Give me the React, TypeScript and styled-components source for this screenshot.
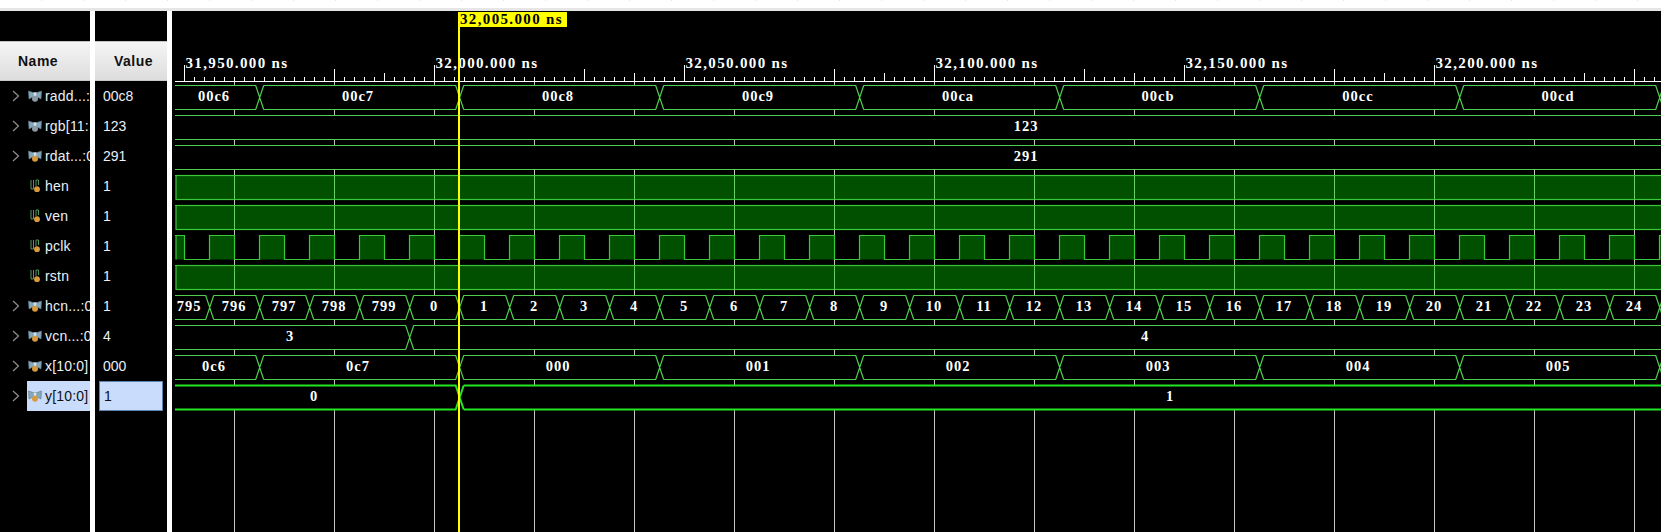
import React from "react"
import styled, { createGlobalStyle } from "styled-components"

const GlobalStyle = createGlobalStyle`
    html, body {
        margin: 0;
        padding: 0;
        background: #fff;
        overflow: hidden;
    }
`

const Page = styled.div`
    width: 1661px;
    height: 532px;
    display: flex;
    flex-direction: column;
    font-family: "Liberation Sans", Arial, sans-serif;
    font-size: 14px;
    background: #fff;
`

const TopStrip = styled.div`
    height: 8px;
    flex: none;
    background: repeating-linear-gradient(90deg, #fff 0 41px, #e4e4e4 41px 42px) top / 100% 1px no-repeat #fff;
    border-bottom: 3px solid #e6e6e6;
`

const Main = styled.div`
    flex: 1;
    display: flex;
    gap: 5px;
    min-height: 0;
`

const Column = styled.div<{ $width: number }>`
    width: ${p => p.$width}px;
    flex: none;
    background: #000;
    padding-top: 30px;
    overflow: hidden;
`

const HeaderCell = styled.div<{ $pad: number }>`
    height: 40px;
    box-sizing: border-box;
    display: flex;
    align-items: center;
    padding-left: ${p => p.$pad}px;
    background: linear-gradient(#f5f5f5, #dddddd);
    border-top: 1px solid #c4c4c4;
    border-bottom: 1px solid #c8c8c8;
    color: #111;
    font-weight: bold;
    letter-spacing: 0.5px;
`

const NameRow = styled.div<{ $selected?: boolean }>`
    height: 30px;
    display: flex;
    align-items: center;
    white-space: nowrap;
    padding-left: 12px;
    letter-spacing: 0.2px;
    color: ${p => (p.$selected ? "#101010" : "#e9f0f6")};
    background: ${p => (p.$selected ? "linear-gradient(90deg, #000 27px, #c9dcfb 27px)" : "none")};
`

const Chevron = styled.svg`
    width: 8px;
    height: 12px;
    flex: none;
`

const ChevronSlot = styled.div`
    width: 16px;
    flex: none;
    display: flex;
`

const SignalIcon = styled.svg`
    width: 14px;
    height: 14px;
    flex: none;
    margin-right: 3px;
`

const ValueRow = styled.div<{ $selected?: boolean }>`
    height: 30px;
    box-sizing: border-box;
    display: flex;
    align-items: center;
    padding-left: ${p => (p.$selected ? "4px" : "8px")};
    margin-left: ${p => (p.$selected ? "4px" : "0")};
    width: ${p => (p.$selected ? "64px" : "auto")};
    color: ${p => (p.$selected ? "#101010" : "#e9f0f6")};
    background: ${p => (p.$selected ? "#c9dcfb" : "none")};
    border: ${p => (p.$selected ? "1px solid #5a83ab" : "none")};
`

const WavePanel = styled.div`
    flex: 1;
    background: #000;
    min-width: 0;
`

const WaveSvg = styled.svg`
    display: block;
    width: 100%;
    height: 100%;
`

const TimeText = styled.text`
    font-family: "Liberation Serif", "DejaVu Serif", serif;
    font-size: 15px;
    font-weight: bold;
    letter-spacing: 1.35px;
    fill: #fff;
`

const BusText = styled(TimeText)`
    font-size: 14.5px;
    letter-spacing: 1px;
    text-anchor: middle;
`

const CursorText = styled(TimeText)`
    fill: #000;
`

type Signal = { name: string; value: string; kind: "bus" | "bit"; orb: string; selected?: boolean }

const signals: Signal[] = [
    { name: "radd...:", value: "00c8", kind: "bus", orb: "#8d9aa3" },
    { name: "rgb[11:", value: "123", kind: "bus", orb: "#8d9aa3" },
    { name: "rdat...:0", value: "291", kind: "bus", orb: "#d99a3c" },
    { name: "hen", value: "1", kind: "bit", orb: "#d99a3c" },
    { name: "ven", value: "1", kind: "bit", orb: "#d99a3c" },
    { name: "pclk", value: "1", kind: "bit", orb: "#d99a3c" },
    { name: "rstn", value: "1", kind: "bit", orb: "#d99a3c" },
    { name: "hcn...:0", value: "1", kind: "bus", orb: "#d99a3c" },
    { name: "vcn...:0", value: "4", kind: "bus", orb: "#d99a3c" },
    { name: "x[10:0]", value: "000", kind: "bus", orb: "#d99a3c" },
    { name: "y[10:0]", value: "1", kind: "bus", orb: "#d99a3c", selected: true },
]

// panel starts at x=172, y=11 so everything below is shifted from page coords
const px = (x: number) => x - 172
const py = (y: number) => y - 11
const W = 1489
const H = 521
const rowTop = (i: number) => 85.5 + 30 * i
const LINE = "#4fcf4f"
const BRIGHT = "#24e524"
const FILL = "#005000"
const FILL_LINE = "#38c838"
const GRID = "#c4c4c4"

const gridXs = Array.from({ length: 15 }, (_, i) => 234.5 + i * 100)
const range = (n: number, f: (i: number) => number) => Array.from({ length: n }, (_, i) => f(i))

const tallTicks = [334, 584, 834, 1084, 1334, 1634]
const midTicks = [384, 634, 884, 1134, 1384, 1584]
const labels = [
    { x: 184.5, t: "31,950.000 ns" },
    { x: 434.5, t: "32,000.000 ns" },
    { x: 684.5, t: "32,050.000 ns" },
    { x: 934.5, t: "32,100.000 ns" },
    { x: 1184.5, t: "32,150.000 ns" },
    { x: 1434.5, t: "32,200.000 ns" },
]

const Ruler = () => {
    const ticks = range(150, i => 184.5 + i * 10)
    return (
        <g>
            <line x1={px(175)} x2={W} y1={py(81.5)} y2={py(81.5)} stroke="#fff" />
            {ticks.map(x => {
                const n = Math.floor(x)
                let top = 77
                if (tallTicks.includes(n)) top = 69
                if (midTicks.includes(n)) top = 73
                if (labels.some(l => l.x === x)) top = 65
                return <line key={x} x1={px(x)} x2={px(x)} y1={py(top)} y2={py(81)} stroke="#fff" />
            })}
            {labels.map(l => (
                <TimeText key={l.t} x={px(l.x + 1)} y={py(68)}>{l.t}</TimeText>
            ))}
        </g>
    )
}

const Bus = ({ row, edges, text, bright }: {
    row: number
    edges: number[]
    text: { x: number; t: string }[]
    bright?: boolean
}) => {
    const top = rowTop(row)
    const bot = top + 24
    const hw = 4
    let d = ""
    let start = 175
    edges.forEach(e => {
        d += `M${px(start)} ${py(top)}L${px(e - hw)} ${py(top)}L${px(e + hw)} ${py(bot)}`
        d += `M${px(start)} ${py(bot)}L${px(e - hw)} ${py(bot)}L${px(e + hw)} ${py(top)}`
        start = e + hw
    })
    d += `M${px(start)} ${py(top)}L${W} ${py(top)}M${px(start)} ${py(bot)}L${W} ${py(bot)}`
    return (
        <g>
            <rect x={px(175)} y={py(top)} width={W} height={24} fill="#000" />
            <path d={d} fill="none" stroke={bright ? BRIGHT : LINE} strokeWidth={bright ? 2 : 1.2} />
            {text.map(l => (
                <BusText key={l.x} x={px(l.x)} y={py(top + 15)}>{l.t}</BusText>
            ))}
        </g>
    )
}

const HighBar = ({ row }: { row: number }) => {
    const top = rowTop(row)
    return (
        <g>
            <rect x={px(176)} y={py(top)} width={W} height={24} fill={FILL} stroke={FILL_LINE} strokeWidth={1.2} />
            <line x1={px(175)} x2={px(176)} y1={py(top)} y2={py(top)} stroke={FILL_LINE} />
            {gridXs.map(x => (
                <line key={x} x1={px(x)} x2={px(x)} y1={py(top)} y2={py(top + 24)} stroke="#66cf66" />
            ))}
        </g>
    )
}

const Clock = ({ row }: { row: number }) => {
    const top = rowTop(row)
    const bot = top + 24
    const pulses = [[176, 184.5], ...range(30, i => 209.5 + i * 50).map(x => [x, x + 25])]
    let d = `M${px(175)} ${py(top)}`
    pulses.forEach(([a, b]) => {
        d += `L${px(a)} ${py(bot)}`.replace("L", a === 176 ? "M" : "L")
        d += `L${px(a)} ${py(top)}L${px(b)} ${py(top)}L${px(b)} ${py(bot)}`
    })
    return (
        <g>
            <rect x={px(175)} y={py(top)} width={W} height={24} fill="#000" />
            {pulses.map(([a, b]) => (
                <rect key={a} x={px(a)} y={py(top)} width={b - a} height={24} fill={FILL} />
            ))}
            <line x1={px(175)} x2={px(176)} y1={py(top)} y2={py(top)} stroke={FILL_LINE} />
            <path d={d} fill="none" stroke={FILL_LINE} strokeWidth={1.2} />
        </g>
    )
}

const addrEdges = range(8, i => 259.7 + i * 200)
const slotCentres = range(8, i => (i === 0 ? 214 : 158 + i * 200))
const addrText = ["00c6", "00c7", "00c8", "00c9", "00ca", "00cb", "00cc", "00cd"]
const xText = ["0c6", "0c7", "000", "001", "002", "003", "004", "005"]
const hcntEdges = range(30, i => 209.7 + i * 50)
const hcntText = range(30, i => {
    const n = i < 5 ? 795 + i : i - 5
    return { x: i === 0 ? 189 : 184 + i * 50, t: String(n) }
})

const Waves = () => (
    <WaveSvg viewBox={`0 0 ${W} ${H}`}>
        {gridXs.map(x => (
            <line key={x} x1={px(x)} x2={px(x)} y1={py(82)} y2={H} stroke={GRID} />
        ))}
        <Ruler />
        <Bus row={0} edges={addrEdges} text={addrText.map((t, i) => ({ x: slotCentres[i], t }))} />
        <Bus row={1} edges={[]} text={[{ x: 1026, t: "123" }]} />
        <Bus row={2} edges={[]} text={[{ x: 1026, t: "291" }]} />
        <HighBar row={3} />
        <HighBar row={4} />
        <Clock row={5} />
        <HighBar row={6} />
        <Bus row={7} edges={hcntEdges} text={hcntText} />
        <Bus row={8} edges={[409.7]} text={[{ x: 290, t: "3" }, { x: 1145, t: "4" }]} />
        <Bus row={9} edges={addrEdges} text={xText.map((t, i) => ({ x: slotCentres[i], t }))} />
        <Bus row={10} edges={[459.7]} text={[{ x: 314, t: "0" }, { x: 1170, t: "1" }]} bright />
        <line x1={px(459)} x2={px(459)} y1={py(12)} y2={H} stroke="#ffff00" strokeWidth={2} />
        <rect x={px(459)} y={py(12)} width={108} height={15} fill="#ffff00" />
        <CursorText x={px(460)} y={py(24)}>32,005.000 ns</CursorText>
    </WaveSvg>
)

const BusGlyph = ({ orb }: { orb: string }) => (
    <SignalIcon viewBox="0 0 14 14">
        <path d="M0.5 2 L5 3.5 L9 3.5 L13.5 2 L13 10 L9 8 L5 8 L1 10 Z" fill="#86a8bb" stroke="#5f7b8a" strokeWidth="0.6" />
        <path d="M5.5 3.5 L8.5 3.5 L8 7 L6 7 Z" fill="#d5dfe6" />
        <circle cx="7" cy="9.8" r="3" fill={orb} />
    </SignalIcon>
)

const BitGlyph = ({ orb }: { orb: string }) => (
    <SignalIcon viewBox="0 0 14 14">
        <path d="M3 1 L3 10 L5.5 10 M5.5 10 L5.5 1 M8 1 L8 7 M10.5 1 L10.5 6 M8 1 L10.5 1" fill="none" stroke="#4f9a5c" strokeWidth="1" />
        <circle cx="9" cy="10.2" r="2.9" fill={orb} />
    </SignalIcon>
)

const App = () => (
    <Page>
        <GlobalStyle />
        <TopStrip />
        <Main>
            <Column $width={90}>
                <HeaderCell $pad={18}>Name</HeaderCell>
                {signals.map(s => (
                    <NameRow key={s.name} $selected={s.selected}>
                        <ChevronSlot>
                            {s.kind === "bus" && (
                                <Chevron viewBox="0 0 8 12">
                                    <path d="M1 1 L6.5 6 L1 11" fill="none" stroke="#8a8a8a" strokeWidth="1.3" />
                                </Chevron>
                            )}
                        </ChevronSlot>
                        {s.kind === "bus" ? <BusGlyph orb={s.orb} /> : <BitGlyph orb={s.orb} />}
                        {s.name}
                    </NameRow>
                ))}
            </Column>
            <Column $width={72}>
                <HeaderCell $pad={19}>Value</HeaderCell>
                {signals.map(s => (
                    <ValueRow key={s.name} $selected={s.selected}>{s.value}</ValueRow>
                ))}
            </Column>
            <WavePanel>
                <Waves />
            </WavePanel>
        </Main>
    </Page>
)

export default App
